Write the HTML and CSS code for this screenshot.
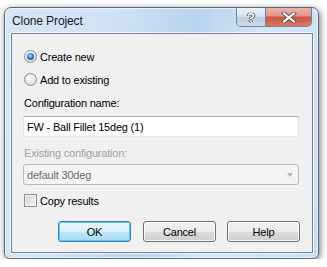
FILE: index.html
```html
<!DOCTYPE html>
<html lang="en">
<head>
    <meta charset="UTF-8">
    <title>Clone Project</title>
    <link rel="stylesheet" href="styles.css">
</head>
<body>
    <div class="window">
        <div class="titlebar">
            <span class="title">Clone Project</span>
            <div class="caption-buttons">
                <div class="cap-btn help-btn">?</div>
                <div class="cap-btn close-btn">
                    <svg width="16" height="11" viewBox="0 0 16 11">
                        <path d="M3 1.5 L13 9.5 M13 1.5 L3 9.5" stroke="#5a5a5a" stroke-width="4" stroke-linecap="square"/>
                        <path d="M3 1.5 L13 9.5 M13 1.5 L3 9.5" stroke="#ffffff" stroke-width="2" stroke-linecap="square"/>
                    </svg>
                </div>
            </div>
        </div>
        <div class="client">
            <div class="option">
                <span class="radio checked"></span>
                <span>Create new</span>
            </div>
            <div class="option">
                <span class="radio"></span>
                <span>Add to existing</span>
            </div>
            <div class="label">Configuration name:</div>
            <div class="field">FW - Ball Fillet 15deg (1)</div>
            <div class="label disabled">Existing configuration:</div>
            <div class="combo">
                <span>default 30deg</span>
                <span class="arrow"></span>
            </div>
            <div class="option check-row">
                <span class="checkbox"></span>
                <span>Copy results</span>
            </div>
            <div class="buttons">
                <div class="btn default">OK</div>
                <div class="btn">Cancel</div>
                <div class="btn">Help</div>
            </div>
        </div>
    </div>
</body>
</html>
```

FILE: styles.css
```css
body {
    margin: 0;
    background-color: #ffffff;
    font-family: "Liberation Sans", Arial, sans-serif;
    font-size: 11px;
    color: #000000;
}

.window {
    margin: 7px 0 0 4px;
    width: 315px;
    height: 252px;
    box-sizing: border-box;
    border: 1px solid #56677c;
    border-radius: 7px 7px 6px 6px;
    background: linear-gradient(105deg, #d6e6f6 0%, #cfe2f4 30%, #b9d3ee 52%, #d4e5f6 70%, #c9ddf2 100%);
    box-shadow: 1px 2px 7px rgba(0, 0, 0, 0.55), inset 0 0 0 1px rgba(255, 255, 255, 0.6);
    display: flex;
    flex-direction: column;
}

.titlebar {
    height: 25px;
    display: flex;
    align-items: flex-start;
}

.title {
    margin: 6px 0 0 7px;
    font-size: 12px;
    letter-spacing: -0.1px;
    color: #1a1a1a;
}

.caption-buttons {
    margin-left: auto;
    margin-right: 6px;
    display: flex;
    border: 1px solid #75859a;
    border-top: none;
    border-radius: 0 0 5px 5px;
    overflow: hidden;
}

.cap-btn {
    height: 18px;
    display: flex;
    align-items: center;
    justify-content: center;
}

.help-btn {
    width: 28px;
    border-right: 1px solid #75859a;
    background: linear-gradient(#e6eff7 0%, #d6e2ee 50%, #bccddc 50%, #cddbe7 100%);
    font-size: 13px;
    font-weight: bold;
    color: #ffffff;
    text-shadow: 0 0 1px #3a3a3a, 0 0 1px #3a3a3a, 1px 0 0 #666666, -1px 0 0 #666666;
}

.close-btn {
    width: 45px;
    background: linear-gradient(#edb3aa 0%, #e29486 45%, #cd523e 50%, #d87a68 100%);
}

.client {
    margin: 0 5px 5px 6px;
    flex: 1;
    border: 1px solid #71839a;
    background-color: #f0f0f0;
    padding: 11px 13px 0 11px;
    box-shadow: 0 0 0 1px rgba(255, 255, 255, 0.7);
}

.option {
    height: 23px;
    display: flex;
    align-items: center;
    gap: 3px;
    letter-spacing: -0.2px;
}

.radio {
    width: 11px;
    height: 11px;
    margin-left: 1px;
    border: 1px solid #8c8f94;
    border-radius: 50%;
    background: radial-gradient(circle at 40% 35%, #ffffff 0%, #e6e6e6 50%, #cfcfcf 100%);
    position: relative;
}

.radio.checked::after {
    content: "";
    position: absolute;
    left: 2px;
    top: 2px;
    width: 7px;
    height: 7px;
    border-radius: 50%;
    background: radial-gradient(circle at 45% 40%, #b8e0ff 0%, #2f7fd0 45%, #0c3f86 100%);
}

.label {
    height: 23px;
    display: flex;
    align-items: center;
    padding-left: 1px;
    letter-spacing: -0.2px;
}

.label.disabled {
    margin-top: 5px;
    height: 22px;
    color: #a2a2a2;
}

.field {
    margin-top: 2px;
    height: 21px;
    box-sizing: border-box;
    border: 1px solid #e2e3ea;
    border-top-color: #abadb3;
    border-bottom-color: #e3e9ef;
    background-color: #ffffff;
    padding-left: 3px;
    display: flex;
    align-items: center;
    letter-spacing: -0.2px;
}

.combo {
    height: 21px;
    box-sizing: border-box;
    border: 1px solid #b8bcbf;
    border-radius: 3px;
    background-color: #f4f4f4;
    padding: 0 5px 0 3px;
    display: flex;
    align-items: center;
    justify-content: space-between;
    color: #6d6d6d;
    letter-spacing: -0.2px;
}

.arrow {
    width: 0;
    height: 0;
    border-left: 3px solid transparent;
    border-right: 3px solid transparent;
    border-top: 4px solid #b4b4b4;
}

.check-row {
    margin-top: 5px;
    height: 21px;
}

.checkbox {
    width: 11px;
    height: 11px;
    margin-left: 1px;
    border: 1px solid #8f8f8f;
    background: linear-gradient(135deg, #d2d2d2 0%, #e8e8e8 60%, #f6f6f6 100%);
    box-shadow: inset 0 0 0 1px #f4f4f4;
}

.buttons {
    margin-top: 10px;
    margin-right: -1px;
    display: flex;
    justify-content: flex-end;
    gap: 11px;
}

.btn {
    width: 73px;
    height: 21px;
    box-sizing: border-box;
    border: 1px solid #707070;
    border-radius: 3px;
    background: linear-gradient(#f2f2f2 0%, #ebebeb 50%, #dddddd 50%, #cfcfcf 100%);
    box-shadow: inset 0 0 0 1px rgba(255, 255, 255, 0.8);
    display: flex;
    align-items: center;
    justify-content: center;
    letter-spacing: -0.2px;
}

.btn.default {
    margin-right: 1px;
    border-color: #3c7fb1;
    background: linear-gradient(#eaf6fd 0%, #d9f0fc 50%, #bee6fd 50%, #a7d9f5 100%);
    box-shadow: inset 0 0 0 1px #5fc9f5;
}
```
